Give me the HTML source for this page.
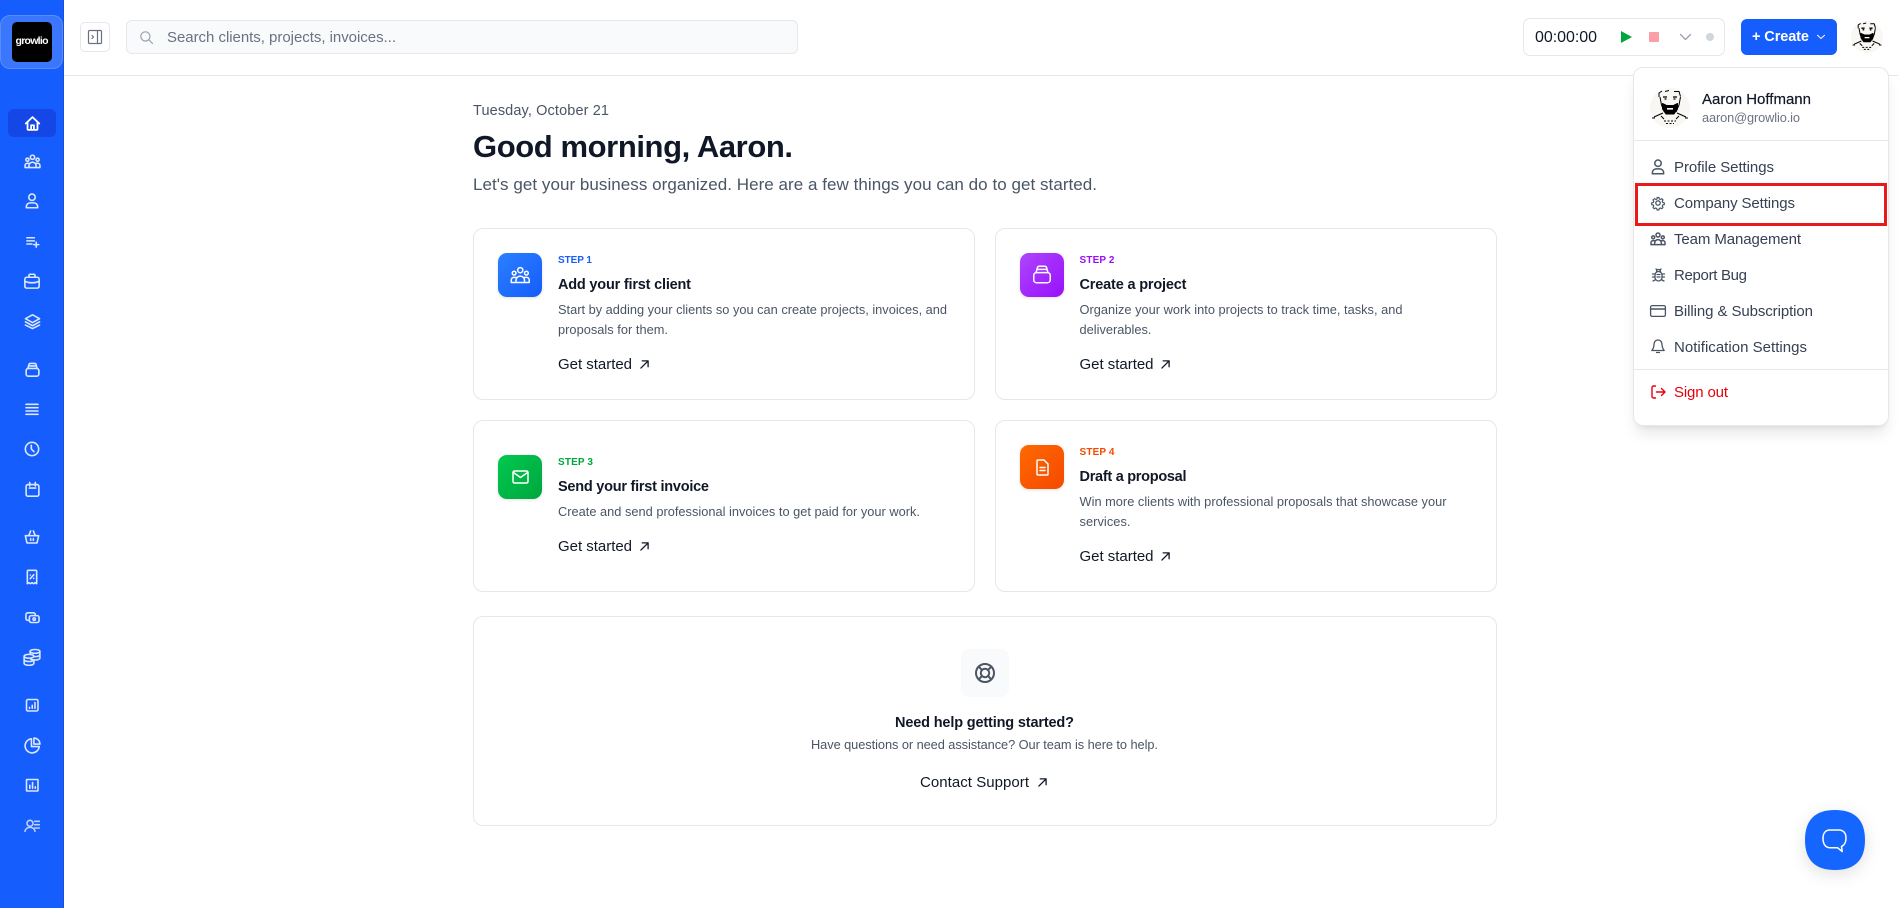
<!DOCTYPE html>
<html lang="en"><head><meta charset="utf-8"><title>Growlio Dashboard</title>
<style>
*{box-sizing:border-box}
html,body{margin:0;padding:0;width:1898px;height:908px;overflow:hidden;background:#fff;font-family:"Liberation Sans",Arial,sans-serif;color:#101828}
.a{position:absolute}
.t{position:absolute;white-space:nowrap;line-height:20px;height:20px}
svg{position:absolute;overflow:visible;fill:none;stroke:currentColor;stroke-width:1.500;stroke-linecap:round;stroke-linejoin:round}
symbol *{vector-effect:non-scaling-stroke}
#side{left:0;top:0;width:64px;height:908px;background:#155dfc;border-right:1px solid #1a50d8;color:#dbe6ff}
#side svg{stroke-width:1.600}
.card{position:absolute;border:1px solid #e5e7eb;border-radius:10px;background:#fff;width:502px}
.tile{position:absolute;width:44px;height:44px;border-radius:9px;box-shadow:0 1px 3px rgba(0,0,0,.12);color:#fff}
.step{font-size:10px;font-weight:700}
.ti{font-size:14.500px;font-weight:700}
.de{font-size:12.800px;color:#4a5565}
.go{font-size:15px;color:#101828}
.mi{font-size:15px;color:#364153}
.mic{color:#4a5565}
</style></head><body>
<svg width="0" height="0" style="position:absolute"><defs>
<symbol id="home" viewBox="0 0 24 24"><path d="M2.500 12 12 3l9.500 9M5 10v9.500A1.500 1.500 0 0 0 6.500 21h11a1.500 1.500 0 0 0 1.500-1.500V10M10 21v-6.500h4V21"/></symbol>
<symbol id="team" viewBox="0 0 24 24"><circle cx="12" cy="6" r="3"/><circle cx="4.800" cy="9.500" r="2.200"/><circle cx="19.200" cy="9.500" r="2.200"/><path d="M1.500 20.500v-3A3 3 0 0 1 4.500 14.500H7M22.500 20.500v-3a3 3 0 0 0-3-3H17M1.500 20.500h21M7 20.500v-2.500a5 5 0 0 1 10 0v2.500"/></symbol>
<symbol id="user" viewBox="0 0 24 24"><circle cx="12" cy="7" r="4.300"/><path d="M4.500 21v-1.500a5 5 0 0 1 5-5h5a5 5 0 0 1 5 5V21z"/></symbol>
<symbol id="lplus" viewBox="0 0 24 24"><path d="M3 6h12M3 11h12M3 16h8M18 13v8M14 17h8"/></symbol>
<symbol id="case" viewBox="0 0 24 24"><rect x="2.500" y="7" width="19" height="14.500" rx="2.500"/><path d="M8 7V4.500A1.500 1.500 0 0 1 9.500 3h5A1.500 1.500 0 0 1 16 4.500V7M2.500 12.500c6 2.500 13 2.500 19 0M12 14v.01"/></symbol>
<symbol id="layers" viewBox="0 0 24 24"><path d="M12 2.500 22 8l-10 5.500L2 8zM2 12.500l10 5.500 10-5.500M2 17l10 5 10-5"/></symbol>
<symbol id="box" viewBox="0 0 24 24"><rect x="3" y="10.500" width="18" height="11" rx="3"/><path d="M5.500 10.500 7 5a2 2 0 0 1 2-1.500h6A2 2 0 0 1 17 5l1.500 5.500M6.500 7h11"/></symbol>
<symbol id="lines" viewBox="0 0 24 24"><path d="M3 5h18M3 10h18M3 15h18M3 20h18"/></symbol>
<symbol id="clock" viewBox="0 0 24 24"><circle cx="12" cy="12" r="10"/><path d="M11 6.500V12l4 4"/></symbol>
<symbol id="cal" viewBox="0 0 24 24"><rect x="3" y="5" width="18" height="16.500" rx="2.500"/><path d="M8 2v5M16 2v5M7.500 10h9"/></symbol>
<symbol id="basket" viewBox="0 0 24 24"><path d="M2 10h20l-2.500 11h-15zM7 10l3-7M17 10l-3-7M10 14.500v2.500M14 14.500v2.500"/></symbol>
<symbol id="receipt" viewBox="0 0 24 24"><path d="M5 3.500A1.500 1.500 0 0 1 6.500 2h11A1.500 1.500 0 0 1 19 3.500V22l-2.300-1.500-2.300 1.500-2.400-1.500L9.600 22l-2.300-1.500L5 22zM9.300 14.500l5.400-6M9.500 9v.01M14.500 14v.01"/></symbol>
<symbol id="money" viewBox="0 0 24 24"><path d="M5 16.500H4.500a3 3 0 0 1-3-3v-6a3 3 0 0 1 3-3h9a3 3 0 0 1 3 3V9"/><rect x="7" y="9" width="15.500" height="11" rx="3"/><circle cx="14.700" cy="14.500" r="1.900"/></symbol>
<symbol id="coins" viewBox="0 0 24 24"><ellipse cx="16" cy="4.500" rx="6.500" ry="2.500"/><path d="M9.500 4.500v9c0 1.400 2.900 2.500 6.500 2.500s6.500-1.100 6.500-2.500v-9M9.500 9c0 1.400 2.900 2.500 6.500 2.500S22.500 10.400 22.500 9"/><ellipse cx="8" cy="11" rx="6.500" ry="2.500" fill="#155dfc"/><path d="M1.500 11v9.500C1.500 21.900 4.400 23 8 23s6.500-1.100 6.500-2.500V16M1.500 15.500c0 1.400 2.900 2.500 6.500 2.500s6.500-1.100 6.500-2.500"/></symbol>
<symbol id="rep" viewBox="0 0 24 24"><rect x="2.500" y="2.500" width="19" height="19" rx="2.500"/><path d="M7.500 17v-1.500M12 17v-5M16.500 17V7.500"/></symbol>
<symbol id="pie" viewBox="0 0 24 24"><path d="M10.500 2.500a10 10 0 1 0 11 11H10.500z"/><path d="M14 1.500a8.500 8.500 0 0 1 8.500 8.500H14z"/></symbol>
<symbol id="rep2" viewBox="0 0 24 24"><rect x="2.500" y="2.500" width="19" height="19" rx="1"/><path d="M8 17v-5M12.500 17V7.500M17 17v-2.500"/></symbol>
<symbol id="ulist" viewBox="0 0 24 24"><circle cx="9" cy="8" r="4.500"/><path d="M1.500 20c.5-3.500 3.500-6 7.500-6s7 2.500 7.500 6M16 5h7M16 10h7M16 15h7"/></symbol>
<symbol id="arrow" viewBox="0 0 10 10"><path d="M1 9 9 1M2.500 1H9v6.500"/></symbol>
<symbol id="ava" viewBox="0 0 40 40"><circle cx="20" cy="20" r="20" fill="#f8f7f4" stroke="none"/><g stroke="#000" stroke-linecap="butt" stroke-width="1"><path d="M9 9 9 5 12 3M15 3.500l4-1M24 3.500h5l1.500 5M10 9l1.500 8 3 7M30.500 9 29 17l-3 7" fill="none"/><path d="M13 9h4M23 9h4M14.500 11h2M23.500 11h2" stroke-width="1.300"/><path d="M12.500 15.500l4 2h7l4-2v5.500L24 26h-8l-3.500-5z" fill="#000"/><path d="M4 29 13 25M36 29 27 25M11 28l3 3M29 28l-3 3M2 30h3M35 30h3" fill="none"/><path d="M14 33h12M16 35.500h8" stroke-dasharray="2 1.500" fill="none"/></g><rect x="17" y="20" width="6" height="1.600" fill="#fff" stroke="none"/></symbol>
</defs></svg>

<!-- Sidebar -->
<div id="side" class="a">
<div class="a" style="left:0;top:15px;width:63px;height:54px;background:#3a77fd;border:1px solid #5a8cfd;border-radius:10px"></div>
<div class="a" style="left:12px;top:22px;width:40px;height:40px;background:#000;border-radius:5px"></div>
<div class="t" data-w="33" style="left:15.500px;top:31px;font-size:10.500px;font-weight:700;color:#fff">growlio</div>
<div class="a" style="left:8px;top:109px;width:48px;height:28px;background:#1447e6;border-radius:6px"></div>
<svg style="left:23.500px;top:114.500px;color:#fff;stroke-width:1.800" width="17" height="17"><use href="#home"/></svg>
<svg style="left:23.500px;top:152.500px" width="17" height="17"><use href="#team"/></svg>
<svg style="left:23px;top:192px" width="18" height="18"><use href="#user"/></svg>
<svg style="left:24.500px;top:233.500px" width="15" height="15"><use href="#lplus"/></svg>
<svg style="left:23px;top:272px" width="18" height="18"><use href="#case"/></svg>
<svg style="left:23.500px;top:312.500px" width="17" height="17"><use href="#layers"/></svg>
<svg style="left:23.500px;top:360.500px" width="17" height="17"><use href="#box"/></svg>
<svg style="left:24px;top:401px" width="16" height="16"><use href="#lines"/></svg>
<svg style="left:24px;top:441px" width="16" height="16"><use href="#clock"/></svg>
<svg style="left:23.500px;top:480.500px" width="17" height="17"><use href="#cal"/></svg>
<svg style="left:24px;top:529px" width="16" height="16"><use href="#basket"/></svg>
<svg style="left:24px;top:569px" width="16" height="16"><use href="#receipt"/></svg>
<svg style="left:24.500px;top:609.500px" width="15" height="15"><use href="#money"/></svg>
<svg style="left:23px;top:648px" width="18" height="18"><use href="#coins"/></svg>
<svg style="left:24.750px;top:697.750px" width="14.500" height="14.500"><use href="#rep"/></svg>
<svg style="left:23.500px;top:736.500px" width="17" height="17"><use href="#pie"/></svg>
<svg style="left:24.750px;top:777.750px" width="14.500" height="14.500"><use href="#rep2"/></svg>
<svg style="left:24px;top:817.500px;color:#bcd0ff;" width="16" height="16"><use href="#ulist"/></svg>
</div>

<!-- Topbar -->
<div class="a" style="left:64px;top:75px;width:1834px;height:1px;background:#e5e7eb"></div>
<div class="a" style="left:80px;top:22px;width:30px;height:30px;border:1px solid #e5e7eb;border-radius:5px;background:#fff"></div>
<svg style="left:88px;top:30px;color:#6a7282;stroke-width:1.200" width="14" height="14" viewBox="0 0 14 14"><rect x=".5" y=".5" width="13" height="13" rx="1"/><path d="M9.500.5v13M4 5.500 5.500 7 4 8.500"/></svg>
<div class="a" style="left:126px;top:20px;width:672px;height:34px;border:1px solid #e5e7eb;border-radius:6px;background:#f9fafb"></div>
<svg style="left:140px;top:31px;color:#99a1af;stroke-width:1.200" width="13" height="13" viewBox="0 0 13 13"><circle cx="5.400" cy="5.400" r="4.600"/><path d="m8.800 8.800 3.700 3.700"/></svg>
<div class="t" data-w="229" style="left:167px;top:27.500px;font-size:15px;color:#6a7282">Search clients, projects, invoices...</div>

<div class="a" style="left:1523px;top:18px;width:202px;height:38px;border:1px solid #e5e7eb;border-radius:7px;background:#fff"></div>
<div class="t" data-w="62" style="left:1535px;top:27.500px;font-size:16px;color:#101828">00:00:00</div>
<svg style="left:1621px;top:31px;stroke:none" width="11" height="12" viewBox="0 0 11 12"><path d="M0 0 11 6 0 12z" fill="#00a63e"/></svg>
<div class="a" style="left:1649px;top:32px;width:10px;height:10px;background:#fb9ea5;border-radius:1px"></div>
<svg style="left:1680px;top:34px;color:#99a1af;stroke-width:1.300" width="11" height="6" viewBox="0 0 11 6"><path d="m.5.500 5 5 5-5"/></svg>
<div class="a" style="left:1706px;top:33px;width:8px;height:8px;border-radius:50%;background:#d1d5dc"></div>
<div class="a" style="left:1741px;top:19px;width:96px;height:36px;background:#155dfc;border-radius:6px"></div>
<div class="t" data-w="57" style="left:1752px;top:27px;font-size:14.500px;font-weight:700;color:#fff">+ Create</div>
<svg style="left:1817px;top:35px;color:#fff;stroke-width:1" width="8" height="4" viewBox="0 0 8 4"><path d="m.5.300 3.500 3.200L7.500.300"/></svg>
<svg style="left:1851px;top:21px" width="32" height="32"><use href="#ava"/></svg>

<!-- Main -->
<div class="t" data-w="136" style="left:473px;top:100.500px;font-size:14.500px;color:#4a5565">Tuesday, October 21</div>
<div class="t" data-w="320" style="left:473px;top:130px;line-height:34px;height:34px;font-size:31px;font-weight:700;color:#101828">Good morning, Aaron.</div>
<div class="t" data-w="624" style="left:473px;top:175px;font-size:17px;color:#4a5565">Let's get your business organized. Here are a few things you can do to get started.</div>

<!-- Card 1 -->
<div class="card" style="left:473px;top:228px;height:172px"></div>
<div class="tile" style="left:498px;top:253px;background:linear-gradient(135deg,#2b7fff,#155dfc)"><svg style="left:11.750px;top:11.500px" width="20.500" height="20.500"><use href="#team"/></svg></div>
<div class="t step" data-w="34" style="left:558px;top:250.500px;color:#155dfc">STEP 1</div>
<div class="t ti" data-w="133" style="left:558px;top:274.500px">Add your first client</div>
<div class="t de" data-w="389" style="left:558px;top:300px">Start by adding your clients so you can create projects, invoices, and</div>
<div class="t de" data-w="110" style="left:558px;top:320px">proposals for them.</div>
<div class="t go" data-w="74" style="left:558px;top:355px">Get started</div>
<svg style="left:639.500px;top:359.500px;stroke-width:1.300" width="9" height="9"><use href="#arrow"/></svg>

<!-- Card 2 -->
<div class="card" style="left:995px;top:228px;height:172px"></div>
<div class="tile" style="left:1020px;top:253px;background:linear-gradient(135deg,#ad46ff,#9810fa)"><svg style="left:11px;top:10px" width="22" height="22"><use href="#box"/></svg></div>
<div class="t step" data-w="35" style="left:1079.500px;top:250.500px;color:#9810fa">STEP 2</div>
<div class="t ti" data-w="107" style="left:1079.500px;top:274.500px">Create a project</div>
<div class="t de" data-w="323" style="left:1079.500px;top:300px">Organize your work into projects to track time, tasks, and</div>
<div class="t de" data-w="72" style="left:1079.500px;top:320px">deliverables.</div>
<div class="t go" data-w="74" style="left:1079.500px;top:355px">Get started</div>
<svg style="left:1161px;top:359.500px;stroke-width:1.300" width="9" height="9"><use href="#arrow"/></svg>

<!-- Card 3 -->
<div class="card" style="left:473px;top:420px;height:172px"></div>
<div class="tile" style="left:498px;top:455px;background:linear-gradient(135deg,#00c950,#00a63e)"><svg style="left:13.500px;top:15px;stroke-width:1.500" width="17" height="14" viewBox="0 0 17 14"><rect x="1" y="1" width="15" height="12" rx="1.500"/><path d="m1.500 2.500 7 5 7-5"/></svg></div>
<div class="t step" data-w="35" style="left:558px;top:452.500px;color:#00a63e">STEP 3</div>
<div class="t ti" data-w="151" style="left:558px;top:476.500px">Send your first invoice</div>
<div class="t de" data-w="362" style="left:558px;top:502px">Create and send professional invoices to get paid for your work.</div>
<div class="t go" data-w="74" style="left:558px;top:537px">Get started</div>
<svg style="left:639.500px;top:541.500px;stroke-width:1.300" width="9" height="9"><use href="#arrow"/></svg>

<!-- Card 4 -->
<div class="card" style="left:995px;top:420px;height:172px"></div>
<div class="tile" style="left:1020px;top:445px;background:linear-gradient(135deg,#ff6900,#f54900)"><svg style="left:15.500px;top:13.500px;stroke-width:1.500" width="13" height="17" viewBox="0 0 13 17"><path d="M2 1h6l4 4v10a1 1 0 0 1-1 1H2a1 1 0 0 1-1-1V2a1 1 0 0 1 1-1zM4 8.500h5M4 11.500h5"/></svg></div>
<div class="t step" data-w="35" style="left:1079.500px;top:442.500px;color:#f54900">STEP 4</div>
<div class="t ti" data-w="107" style="left:1079.500px;top:466.500px">Draft a proposal</div>
<div class="t de" data-w="367" style="left:1079.500px;top:492px">Win more clients with professional proposals that showcase your</div>
<div class="t de" data-w="51" style="left:1079.500px;top:512px">services.</div>
<div class="t go" data-w="74" style="left:1079.500px;top:547px">Get started</div>
<svg style="left:1161px;top:551.500px;stroke-width:1.300" width="9" height="9"><use href="#arrow"/></svg>

<!-- Help card -->
<div class="card" style="left:473px;top:616px;width:1024px;height:210px"></div>
<div class="a" style="left:961px;top:649px;width:48px;height:48px;background:#f9fafb;border-radius:8px"></div>
<svg style="left:975px;top:663px;color:#4a5565;stroke-width:2" width="20" height="20" viewBox="0 0 20 20"><circle cx="10" cy="10" r="9"/><circle cx="10" cy="10" r="4.200"/><path d="m3.600 3.600 3.400 3.400M16.400 3.600 13 7M3.600 16.400 7 13M16.400 16.400 13 13"/></svg>
<div class="t" data-w="179" style="left:895px;top:713px;font-size:14.500px;font-weight:700;color:#101828">Need help getting started?</div>
<div class="t" data-w="347" style="left:811px;top:735px;font-size:12.800px;color:#4a5565">Have questions or need assistance? Our team is here to help.</div>
<div class="t" data-w="109" style="left:920px;top:773px;font-size:15px;color:#101828">Contact Support</div>
<svg style="left:1037.500px;top:778px;stroke-width:1.300" width="9" height="9"><use href="#arrow"/></svg>

<!-- Dropdown -->
<div class="a" style="left:1633px;top:67px;width:256px;height:359px;background:#fff;border:1px solid #e5e7eb;border-radius:10px;box-shadow:0 10px 15px -3px rgba(0,0,0,.1),0 4px 6px -4px rgba(0,0,0,.1)"></div>
<svg style="left:1650px;top:88px" width="40" height="40"><use href="#ava"/></svg>
<div class="t" data-w="109" style="left:1702px;top:90px;font-size:15px;color:#101828;-webkit-text-stroke:.2px #101828">Aaron Hoffmann</div>
<div class="t" data-w="98" style="left:1702px;top:108px;font-size:12.800px;color:#6a7282">aaron@growlio.io</div>
<div class="a" style="left:1634px;top:140px;width:254px;height:1px;background:#e5e7eb"></div>

<svg class="mic" style="left:1649px;top:157.500px;stroke-width:1.500" width="18" height="18"><use href="#user"/></svg>
<div class="t mi" data-w="100" style="left:1674px;top:157.500px">Profile Settings</div>

<svg class="mic" style="left:1651px;top:196px;stroke-width:1.300" width="14" height="14" viewBox="0 0 14 14"><circle cx="7" cy="7" r="2.200"/><path d="M6 .8h2l.4 1.700 1.300.6 1.500-.9 1.400 1.400-.9 1.500.6 1.300 1.700.4v2l-1.700.4-.6 1.300.9 1.500-1.400 1.400-1.500-.9-1.300.6-.4 1.700H6l-.4-1.700-1.300-.6-1.500.9-1.400-1.400.9-1.500-.6-1.300-1.700-.4v-2l1.700-.4.600-1.300-.9-1.500L3.200 2.200l1.500.9L6 2.500z" transform="translate(.7 .7) scale(.9)"/></svg>
<div class="t mi" data-w="121" style="left:1674px;top:193.500px">Company Settings</div>

<svg class="mic" style="left:1650px;top:231px;stroke-width:1.500" width="16" height="16"><use href="#team"/></svg>
<div class="t mi" data-w="127" style="left:1674px;top:229.500px">Team Management</div>

<svg class="mic" style="left:1652px;top:268px;stroke-width:1.300" width="13" height="14" viewBox="0 0 13 14"><rect x="3" y="3.500" width="7" height="9.500" rx="3.500"/><path d="M4.500 3.500C4.500 2 5.500 1.500 6.500 1.500s2 .5 2 2M3 6H.5M10 6h2.500M3 9H.5M10 9h2.500M3 12l-2 1M10 12l2 1M5 6.500h3M5 9h3M4 1 5 2M9 1 8 2"/></svg>
<div class="t mi" data-w="73" style="left:1674px;top:265.500px">Report Bug</div>

<svg class="mic" style="left:1650px;top:305px;stroke-width:1.300" width="16" height="12" viewBox="0 0 16 12"><rect x=".6" y=".6" width="14.800" height="10.800" rx="1.500"/><path d="M.6 4h14.800" stroke-width="1.500"/></svg>
<div class="t mi" data-w="139" style="left:1674px;top:301.500px">Billing &amp; Subscription</div>

<svg class="mic" style="left:1651px;top:339px;stroke-width:1.300" width="14" height="15" viewBox="0 0 14 15"><path d="M7 1C4.500 1 3 3 3 5.500c0 3-1 4.500-2.200 6h12.400C12 10 11 8.500 11 5.500 11 3 9.500 1 7 1zM5.500 13.500h3"/></svg>
<div class="t mi" data-w="133" style="left:1674px;top:337.500px">Notification Settings</div>

<div class="a" style="left:1634px;top:369px;width:254px;height:1px;background:#e5e7eb"></div>
<svg style="left:1651px;top:385px;color:#e7000b;stroke-width:1.400" width="15" height="14" viewBox="0 0 15 14"><path d="M4.500 1H2.500A1.500 1.500 0 0 0 1 2.500v9A1.500 1.500 0 0 0 2.500 13h2M5.500 7H14M10.500 3.500 14 7l-3.500 3.500"/></svg>
<div class="t mi" data-w="54" style="left:1674px;top:382.500px;color:#e7000b">Sign out</div>

<!-- Red highlight -->
<div class="a" style="left:1635px;top:183px;width:252px;height:43px;border:3px solid #e71b1b"></div>

<!-- Chat -->
<svg style="left:1805px;top:810px;stroke:none;filter:drop-shadow(0 4px 8px rgba(0,0,0,.12))" width="60" height="60" viewBox="0 0 60 60"><path d="M30 0C50 0 60 10 60 30S50 60 30 60 0 50 0 30 10 0 30 0z" fill="#1565ff"/></svg>
<svg style="left:1822px;top:829px;color:#fff;stroke-width:1.500" width="25" height="24" viewBox="0 0 25 24"><path d="M8 1h8.500c4.400 0 7.500 2.400 7.500 8 0 4.500-2 7.500-4.500 8.500l.7 5-4.700-3.800H8C3.600 18.700 1 15 1 9.500S3.600 1 8 1z"/></svg>

<script>
document.querySelectorAll('[data-w]').forEach(function(e){
  var s=document.createElement('span');
  while(e.firstChild)s.appendChild(e.firstChild);
  e.appendChild(s);
  var c=s.getBoundingClientRect().width,n=s.textContent.length-1,w=+e.getAttribute('data-w');
  e.style.letterSpacing=((w-c)/n).toFixed(3)+'px';
});
</script>
</body></html>
